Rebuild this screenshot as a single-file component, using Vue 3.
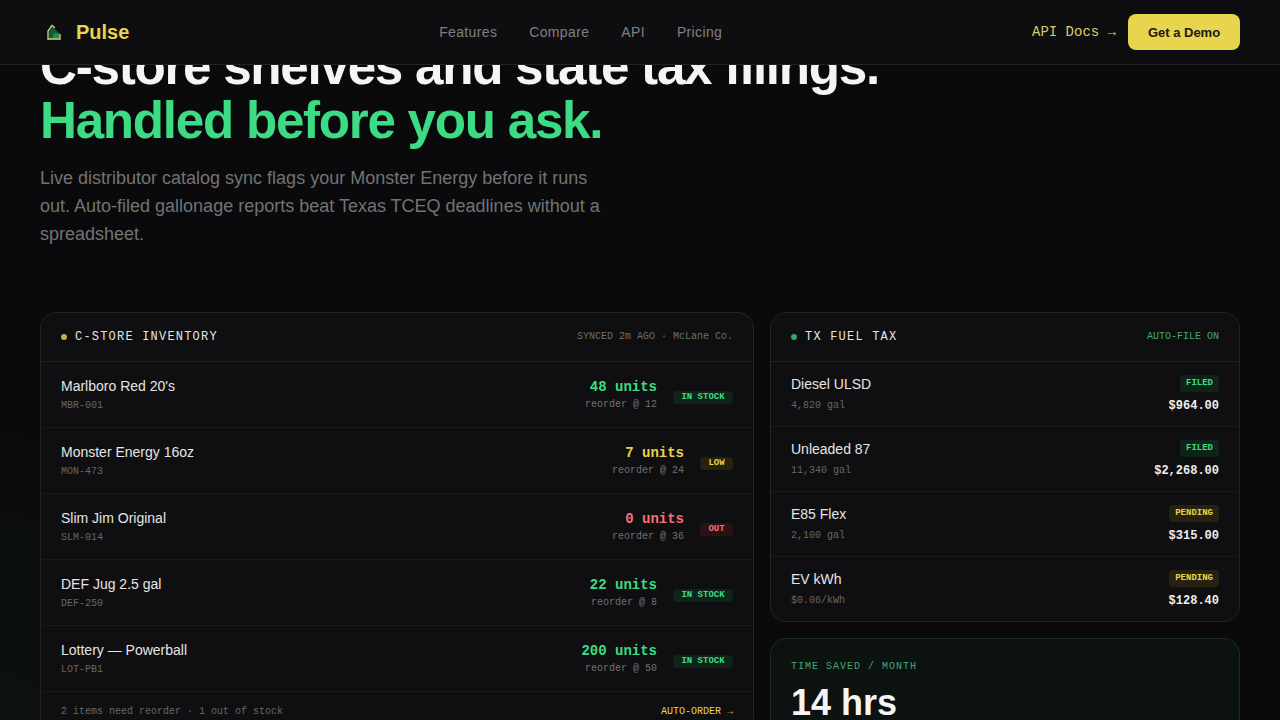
<template>
  <div class="page">
    <header class="nav">
      <div class="brand">
        <svg class="brand-icon" width="28" height="28" viewBox="0 0 28 28" fill="none">
          <path d="M9 20.5v-6.5l3-5 7.500 6v5.500z" fill="#0f5a3a" />
          <path d="M13 20v-3.500l2-2 4 1.500v4z" fill="#1c8a5a" />
          <path d="M8 21.500V13l4-5.500 3 2.500" stroke="#cfd08a" stroke-width="1.300" />
          <path d="M7.500 21h12.500v-5" stroke="#d9cf7a" stroke-width="1.400" />
        </svg>
        <span class="brand-name">Pulse</span>
      </div>
      <nav class="nav-links">
        <a v-for="link in links" :key="link">{{ link }}</a>
      </nav>
      <div class="nav-actions">
        <a class="docs">API Docs →</a>
        <button class="demo">Get a Demo</button>
      </div>
    </header>

    <section class="hero">
      <h1>C-store shelves and state tax filings.<br /><span>Handled before you ask.</span></h1>
      <p>Live distributor catalog sync flags your Monster Energy before it runs out. Auto-filed gallonage reports beat Texas TCEQ deadlines without a spreadsheet.</p>
    </section>

    <section class="panels">
      <div class="card">
        <div class="card-head">
          <div class="card-title"><i class="dot yellow"></i>C-STORE INVENTORY</div>
          <span class="card-meta">SYNCED 2m AGO · McLane Co.</span>
        </div>
        <div v-for="item in inventory" :key="item.sku" class="inv-row">
          <div>
            <div class="name">{{ item.name }}</div>
            <div class="sub sku">{{ item.sku }}</div>
          </div>
          <div class="inv-right">
            <div class="qty-wrap">
              <div class="qty" :class="item.tone">{{ item.qty }} units</div>
              <div class="sub reorder">reorder @ {{ item.reorder }}</div>
            </div>
            <span class="badge inv-badge" :class="item.tone">{{ item.status }}</span>
          </div>
        </div>
        <div class="card-foot">
          <span>2 items need reorder · 1 out of stock</span>
          <a>AUTO-ORDER →</a>
        </div>
      </div>

      <div class="side">
        <div class="card">
          <div class="card-head">
            <div class="card-title"><i class="dot green"></i>TX FUEL TAX</div>
            <span class="card-meta auto">AUTO-FILE ON</span>
          </div>
          <div v-for="tax in taxes" :key="tax.name" class="tax-row">
            <div>
              <div class="name">{{ tax.name }}</div>
              <div class="sub tax-sub">{{ tax.volume }}</div>
            </div>
            <div class="tax-right">
              <span class="badge tax-badge" :class="tax.tone">{{ tax.status }}</span>
              <div class="amount">{{ tax.amount }}</div>
            </div>
          </div>
        </div>
        <div class="saved">
          <div class="saved-label">TIME SAVED / MONTH</div>
          <div class="saved-value">14 hrs</div>
        </div>
      </div>
    </section>
  </div>
</template>

<script setup>
const links = ['Features', 'Compare', 'API', 'Pricing']

const inventory = [
  { name: "Marlboro Red 20's", sku: 'MBR-001', qty: 48, reorder: 12, status: 'IN STOCK', tone: 'ok' },
  { name: 'Monster Energy 16oz', sku: 'MON-473', qty: 7, reorder: 24, status: 'LOW', tone: 'warn' },
  { name: 'Slim Jim Original', sku: 'SLM-014', qty: 0, reorder: 36, status: 'OUT', tone: 'bad' },
  { name: 'DEF Jug 2.5 gal', sku: 'DEF-250', qty: 22, reorder: 8, status: 'IN STOCK', tone: 'ok' },
  { name: 'Lottery — Powerball', sku: 'LOT-PB1', qty: 200, reorder: 50, status: 'IN STOCK', tone: 'ok' },
]

const taxes = [
  { name: 'Diesel ULSD', volume: '4,820 gal', status: 'FILED', tone: 'ok', amount: '$964.00' },
  { name: 'Unleaded 87', volume: '11,340 gal', status: 'FILED', tone: 'ok', amount: '$2,268.00' },
  { name: 'E85 Flex', volume: '2,100 gal', status: 'PENDING', tone: 'warn', amount: '$315.00' },
  { name: 'EV kWh', volume: '$0.06/kWh', status: 'PENDING', tone: 'warn', amount: '$128.40' },
]
</script>

<style>
html,
body {
  margin: 0;
  background: #0a0a0c;
  overflow: hidden;
}
</style>

<style scoped>
.page {
  height: 720px;
  overflow: hidden;
  background: radial-gradient(ellipse 320px 300px at 0 100%, rgba(61, 220, 132, 0.035), transparent), #0a0a0c;
  color: #f5f5f5;
  font-family: 'Liberation Sans', sans-serif;
}
.nav {
  position: fixed;
  top: 0;
  left: 0;
  right: 0;
  z-index: 5;
  height: 64px;
  padding: 0 40px;
  display: flex;
  justify-content: space-between;
  align-items: center;
  background: #0e0e10;
  border-bottom: 1px solid #232325;
}
.brand {
  display: flex;
  align-items: center;
  gap: 8px;
}
.brand-name {
  font-size: 20px;
  font-weight: 700;
  color: #e8d44d;
}
.nav-links {
  display: flex;
  gap: 32px;
  font-size: 14px;
  letter-spacing: 0.35px;
  color: #808084;
}
.nav-actions {
  display: flex;
  align-items: center;
  gap: 12px;
}
.docs {
  font-family: 'Liberation Mono', monospace;
  font-size: 14px;
  color: #d9cb6a;
}
.demo {
  width: 112px;
  height: 36px;
  border: 0;
  border-radius: 8px;
  background: #e8d44d;
  color: #1a1a12;
  font-family: inherit;
  font-size: 13px;
  font-weight: 700;
}
.hero {
  padding: 40px 40px 0;
}
.hero h1 {
  margin: 0;
  font-size: 51.2px;
  line-height: 1.05;
  font-weight: 700;
  letter-spacing: -1.28px;
  color: #f5f5f5;
}
.hero h1 span {
  color: #3ddc84;
}
.hero p {
  margin: 16px 0 0;
  width: 580px;
  font-size: 18px;
  line-height: 28px;
  color: #737373;
}
.panels {
  margin: 64px 40px 0;
  display: grid;
  grid-template-columns: 1fr 470px;
  gap: 16px;
  align-items: start;
}
.side {
  display: flex;
  flex-direction: column;
  gap: 16px;
}
.card {
  background: #0f0f11;
  border: 1px solid #232325;
  border-radius: 16px;
  overflow: hidden;
}
.card-head {
  height: 48px;
  padding: 0 20px;
  display: flex;
  justify-content: space-between;
  align-items: center;
  border-bottom: 1px solid #1f1f21;
}
.card-title {
  display: flex;
  align-items: center;
  gap: 8px;
  font-family: 'Liberation Mono', monospace;
  font-size: 12px;
  letter-spacing: 1.2px;
  color: #e5e5e5;
}
.dot {
  width: 6px;
  height: 6px;
  border-radius: 50%;
}
.dot.yellow {
  background: #c9a94a;
}
.dot.green {
  background: #2fa768;
}
.card-meta {
  font-family: 'Liberation Mono', monospace;
  font-size: 10px;
  color: #6e6e70;
}
.card-meta.auto {
  color: #45a874;
}
.inv-row {
  height: 65px;
  padding: 0 20px;
  display: flex;
  justify-content: space-between;
  align-items: center;
  border-bottom: 1px solid #1a1a1c;
}
.name {
  font-size: 14px;
  line-height: 20px;
  color: #e5e5e5;
}
.sub {
  font-family: 'Liberation Mono', monospace;
  font-size: 10px;
  color: #666668;
}
.sku {
  margin-top: 3px;
  line-height: 14px;
}
.inv-right {
  display: flex;
  align-items: center;
  gap: 16px;
}
.qty-wrap {
  text-align: right;
}
.qty {
  font-family: 'Liberation Mono', monospace;
  font-size: 14px;
  line-height: 20px;
  font-weight: 700;
}
.qty.ok {
  color: #3ddc84;
}
.qty.warn {
  color: #e8d44d;
}
.qty.bad {
  color: #f87171;
}
.reorder {
  margin-top: 1px;
  line-height: 14px;
  color: #707074;
}
.badge {
  border-radius: 4px;
  font-family: 'Liberation Mono', monospace;
  font-size: 9px;
  line-height: 11px;
  font-weight: 700;
}
.inv-badge {
  margin-top: 7px;
  padding: 1px 8.4px;
}
.tax-badge {
  padding: 3px 6px;
}
.badge.ok {
  color: #3ddc84;
  background: #0f2419;
}
.badge.warn {
  color: #e8d44d;
  background: #26220f;
}
.badge.bad {
  color: #f87171;
  background: #2a1316;
}
.card-foot {
  height: 40px;
  padding: 0 20px;
  display: flex;
  justify-content: space-between;
  align-items: center;
  font-family: 'Liberation Mono', monospace;
  font-size: 10px;
  color: #666668;
}
.card-foot a {
  color: #e8d44d;
}
.tax-row {
  height: 64px;
  padding: 0 20px;
  display: flex;
  justify-content: space-between;
  align-items: center;
  border-bottom: 1px solid #1a1a1c;
}
.tax-row:last-child {
  border-bottom: 0;
}
.tax-sub {
  margin-top: 5px;
  line-height: 14px;
}
.tax-right {
  margin-top: 2px;
  display: flex;
  flex-direction: column;
  align-items: flex-end;
  gap: 6px;
}
.amount {
  font-family: 'Liberation Mono', monospace;
  font-size: 12px;
  line-height: 16px;
  font-weight: 700;
  color: #f0f0f0;
}
.saved {
  padding: 21px 20px;
  height: 140px;
  box-sizing: border-box;
  background: #0b120f;
  border: 1px solid #1a2c24;
  border-radius: 16px;
}
.saved-label {
  font-family: 'Liberation Mono', monospace;
  font-size: 10px;
  line-height: 14px;
  letter-spacing: 1px;
  color: #45a874;
}
.saved-value {
  margin-top: 7px;
  font-size: 36px;
  line-height: 44px;
  font-weight: 700;
  color: #f5f5f5;
}
</style>
